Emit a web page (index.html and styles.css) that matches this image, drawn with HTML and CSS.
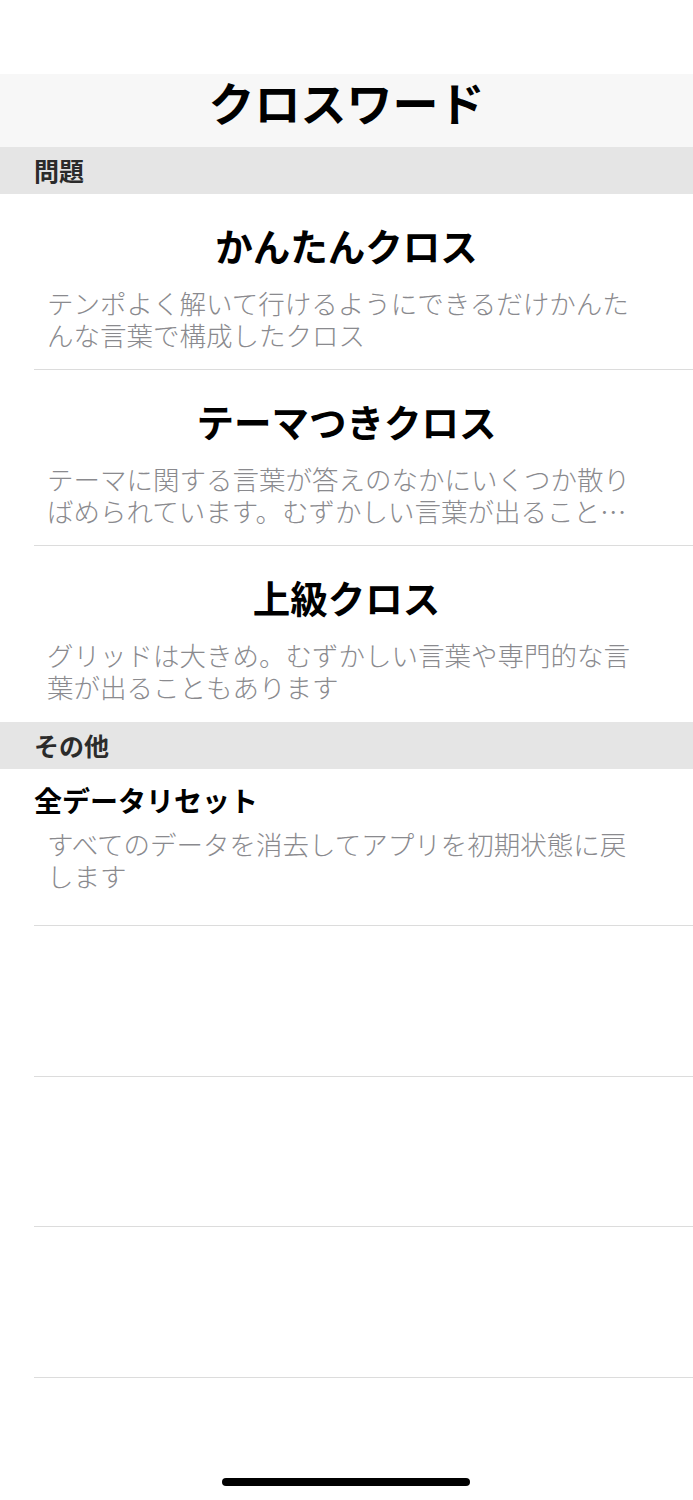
FILE: index.html
```html
<!doctype html>
<html lang="ja">
<head>
    <meta charset="utf-8">
    <meta name="viewport" content="width=device-width, initial-scale=1">
    <title>クロスワード</title>
    <link rel="stylesheet" href="styles.css">
</head>
<body>
    <div class="statusBar"></div>
    <header class="navBar">
        <h1 class="navTitle">クロスワード</h1>
    </header>
    <div class="tableView">
        <div class="sectionHeader">問題</div>
        <div class="cell puzzleCell">
            <div class="puzzleTitle">かんたんクロス</div>
            <div class="cellDetail">テンポよく解いて行けるようにできるだけかんたんな言葉で構成したクロス</div>
        </div>
        <div class="cell puzzleCell">
            <div class="puzzleTitle">テーマつきクロス</div>
            <div class="cellDetail clamped">テーマに関する言葉が答えのなかにいくつか散りばめられています。むずかしい言葉が出ることもあります</div>
        </div>
        <div class="cell puzzleCell lastInSection">
            <div class="puzzleTitle">上級クロス</div>
            <div class="cellDetail">グリッドは大きめ。むずかしい言葉や専門的な言葉が出ることもあります</div>
        </div>
        <div class="sectionHeader">その他</div>
        <div class="cell settingCell">
            <div class="settingTitle">全データリセット</div>
            <div class="cellDetail">すべてのデータを消去してアプリを初期状態に戻します</div>
        </div>
        <div class="cell emptyCell"></div>
        <div class="cell emptyCell"></div>
        <div class="cell emptyCell"></div>
    </div>
    <div class="homeIndicator"></div>
</body>
</html>
```

FILE: styles.css
```css
html, body {
    margin: 0;
    padding: 0;
    background: #ffffff;
}

body {
    width: 693px;
    height: 1500px;
    position: relative;
    font-family: "Noto Sans CJK JP", "Noto Sans", sans-serif;
    color: #000000;
    overflow: hidden;
}

.statusBar {
    height: 74px;
}

.navBar {
    height: 73px;
    background: #f7f7f7;
    display: flex;
    align-items: center;
    justify-content: center;
}

.navTitle {
    margin: 0;
    font-size: 46px;
    font-weight: 600;
    line-height: 56px;
    margin-top: -20px;
}

.sectionHeader {
    height: 47px;
    background: #e5e5e5;
    color: #2b2b2b;
    font-size: 25px;
    font-weight: 600;
    line-height: 47px;
    padding-left: 34px;
}

.cell {
    position: relative;
    box-sizing: border-box;
}

.cell::after {
    content: "";
    position: absolute;
    left: 34px;
    right: 0;
    bottom: 0;
    height: 1px;
    background: #dcdcdc;
}

.lastInSection::after {
    display: none;
}

.puzzleCell {
    height: 176px;
    padding: 28px 40px 0 47px;
}

.puzzleTitle {
    text-align: center;
    font-size: 37.5px;
    font-weight: 600;
    line-height: 46px;
    margin-bottom: 19px;
    margin-right: 7px;
}

.cellDetail {
    font-size: 26.5px;
    font-weight: 300;
    line-height: 32px;
    color: #8a8a8e;
    width: 600px;
}

.clamped {
    display: -webkit-box;
    -webkit-line-clamp: 2;
    -webkit-box-orient: vertical;
    overflow: hidden;
    padding-bottom: 2px;
}

.settingCell {
    height: 157px;
    padding: 13px 0 0 34px;
}

.settingTitle {
    font-size: 28px;
    font-weight: 600;
    line-height: 36px;
    margin-bottom: 10px;
}

.settingCell .cellDetail {
    margin-left: 13px;
}

.emptyCell {
    height: 150.6px;
}

.homeIndicator {
    position: absolute;
    left: 222px;
    top: 1478px;
    width: 248px;
    height: 8px;
    border-radius: 4px;
    background: #000000;
}
```
